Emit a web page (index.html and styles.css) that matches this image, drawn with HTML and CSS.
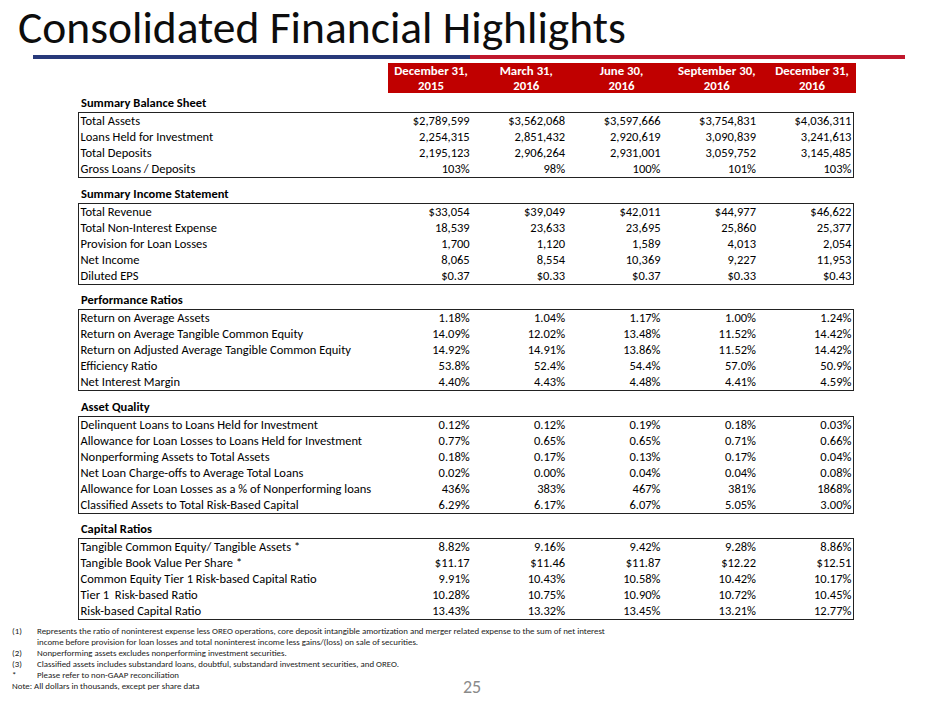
FILE: index.html
```html
<!DOCTYPE html>
<html lang="en">
<head>
<meta charset="utf-8">
<title>Consolidated Financial Highlights</title>
<link rel="stylesheet" href="styles.css">
</head>
<body>
<div class="slide">
  <h1 class="title">Consolidated Financial Highlights</h1>
  <div class="rule"></div>

  <div class="hdr">
    <div class="hdr-grid">
      <div>December 31,<br>2015</div>
      <div>March 31,<br>2016</div>
      <div>June 30,<br>2016</div>
      <div>September 30,<br>2016</div>
      <div>December 31,<br>2016</div>
    </div>
  </div>

  <section class="sec first">
    <h2>Summary Balance Sheet</h2>
    <div class="box">
      <span class="l">Total Assets</span><span class="v">$2,789,599</span><span class="v">$3,562,068</span><span class="v">$3,597,666</span><span class="v">$3,754,831</span><span class="v">$4,036,311</span>
      <span class="l">Loans Held for Investment</span><span class="v">2,254,315</span><span class="v">2,851,432</span><span class="v">2,920,619</span><span class="v">3,090,839</span><span class="v">3,241,613</span>
      <span class="l">Total Deposits</span><span class="v">2,195,123</span><span class="v">2,906,264</span><span class="v">2,931,001</span><span class="v">3,059,752</span><span class="v">3,145,485</span>
      <span class="l">Gross Loans / Deposits</span><span class="v">103%</span><span class="v">98%</span><span class="v">100%</span><span class="v">101%</span><span class="v">103%</span>
    </div>
  </section>

  <section class="sec">
    <h2>Summary Income Statement</h2>
    <div class="box">
      <span class="l">Total Revenue</span><span class="v">$33,054</span><span class="v">$39,049</span><span class="v">$42,011</span><span class="v">$44,977</span><span class="v">$46,622</span>
      <span class="l">Total Non-Interest Expense</span><span class="v">18,539</span><span class="v">23,633</span><span class="v">23,695</span><span class="v">25,860</span><span class="v">25,377</span>
      <span class="l">Provision for Loan Losses</span><span class="v">1,700</span><span class="v">1,120</span><span class="v">1,589</span><span class="v">4,013</span><span class="v">2,054</span>
      <span class="l">Net Income</span><span class="v">8,065</span><span class="v">8,554</span><span class="v">10,369</span><span class="v">9,227</span><span class="v">11,953</span>
      <span class="l">Diluted EPS</span><span class="v">$0.37</span><span class="v">$0.33</span><span class="v">$0.37</span><span class="v">$0.33</span><span class="v">$0.43</span>
    </div>
  </section>

  <section class="sec">
    <h2>Performance Ratios</h2>
    <div class="box">
      <span class="l">Return on Average Assets</span><span class="v">1.18%</span><span class="v">1.04%</span><span class="v">1.17%</span><span class="v">1.00%</span><span class="v">1.24%</span>
      <span class="l">Return on Average Tangible Common Equity</span><span class="v">14.09%</span><span class="v">12.02%</span><span class="v">13.48%</span><span class="v">11.52%</span><span class="v">14.42%</span>
      <span class="l">Return on Adjusted Average Tangible Common Equity</span><span class="v">14.92%</span><span class="v">14.91%</span><span class="v">13.86%</span><span class="v">11.52%</span><span class="v">14.42%</span>
      <span class="l">Efficiency Ratio</span><span class="v">53.8%</span><span class="v">52.4%</span><span class="v">54.4%</span><span class="v">57.0%</span><span class="v">50.9%</span>
      <span class="l">Net Interest Margin</span><span class="v">4.40%</span><span class="v">4.43%</span><span class="v">4.48%</span><span class="v">4.41%</span><span class="v">4.59%</span>
    </div>
  </section>

  <section class="sec">
    <h2>Asset Quality</h2>
    <div class="box">
      <span class="l">Delinquent Loans to Loans Held for Investment</span><span class="v">0.12%</span><span class="v">0.12%</span><span class="v">0.19%</span><span class="v">0.18%</span><span class="v">0.03%</span>
      <span class="l">Allowance for Loan Losses to Loans Held for Investment</span><span class="v">0.77%</span><span class="v">0.65%</span><span class="v">0.65%</span><span class="v">0.71%</span><span class="v">0.66%</span>
      <span class="l">Nonperforming Assets to Total Assets</span><span class="v">0.18%</span><span class="v">0.17%</span><span class="v">0.13%</span><span class="v">0.17%</span><span class="v">0.04%</span>
      <span class="l">Net Loan Charge-offs to Average Total Loans</span><span class="v">0.02%</span><span class="v">0.00%</span><span class="v">0.04%</span><span class="v">0.04%</span><span class="v">0.08%</span>
      <span class="l">Allowance for Loan Losses as a % of Nonperforming loans</span><span class="v">436%</span><span class="v">383%</span><span class="v">467%</span><span class="v">381%</span><span class="v">1868%</span>
      <span class="l">Classified Assets to Total Risk-Based Capital</span><span class="v">6.29%</span><span class="v">6.17%</span><span class="v">6.07%</span><span class="v">5.05%</span><span class="v">3.00%</span>
    </div>
  </section>

  <section class="sec">
    <h2>Capital Ratios</h2>
    <div class="box">
      <span class="l">Tangible Common Equity/ Tangible Assets *</span><span class="v">8.82%</span><span class="v">9.16%</span><span class="v">9.42%</span><span class="v">9.28%</span><span class="v">8.86%</span>
      <span class="l">Tangible Book Value Per Share *</span><span class="v">$11.17</span><span class="v">$11.46</span><span class="v">$11.87</span><span class="v">$12.22</span><span class="v">$12.51</span>
      <span class="l">Common Equity Tier 1 Risk-based Capital Ratio</span><span class="v">9.91%</span><span class="v">10.43%</span><span class="v">10.58%</span><span class="v">10.42%</span><span class="v">10.17%</span>
      <span class="l">Tier 1&nbsp; Risk-based Ratio</span><span class="v">10.28%</span><span class="v">10.75%</span><span class="v">10.90%</span><span class="v">10.72%</span><span class="v">10.45%</span>
      <span class="l">Risk-based Capital Ratio</span><span class="v">13.43%</span><span class="v">13.32%</span><span class="v">13.45%</span><span class="v">13.21%</span><span class="v">12.77%</span>
    </div>
  </section>

  <div class="notes">
    <div class="fn"><span>(1)</span><span>Represents the ratio of noninterest expense less OREO operations, core deposit intangible amortization and merger related expense to the sum of net interest income before provision for loan losses and total noninterest income less gains/(loss) on sale of securities.</span></div>
    <div class="fn"><span>(2)</span><span>Nonperforming assets excludes nonperforming investment securities.</span></div>
    <div class="fn"><span>(3)</span><span>Classified assets includes substandard loans, doubtful, substandard investment securities, and OREO.</span></div>
    <div class="fn"><span>*</span><span>Please refer to non-GAAP reconciliation</span></div>
    <div class="note">Note: All dollars in thousands, except per share data</div>
  </div>

  <div class="pgnum">25</div>
</div>
</body>
</html>
```

FILE: styles.css
```css
* {
  box-sizing: border-box;
  margin: 0;
  padding: 0;
}

body {
  margin: 0;
  background: #ffffff;
  font-family: Carlito, Lato, "Liberation Sans", sans-serif;
  color: #000000;
}

.slide {
  position: relative;
  width: 940px;
  height: 705px;
  overflow: hidden;
  background: #ffffff;
}

.title {
  height: 55px;
  padding: 5px 0 0 18px;
  font-size: 45.5px;
  line-height: 46px;
  font-weight: 400;
  color: #0d0d0d;
  white-space: nowrap;
}

.rule {
  margin-left: 33px;
  width: 872px;
  height: 4px;
  background: linear-gradient(90deg, #27397a 0, #27397a 437px, #c0182c 437px, #c0182c 100%);
}

.hdr {
  margin: 4px 0 0 388px;
  width: 468px;
  height: 30px;
  background: #c00000;
  color: #ffffff;
  font-size: 12.8px;
  line-height: 15px;
  font-weight: 700;
}

.hdr-grid {
  display: grid;
  grid-template-columns: repeat(5, 95.25px);
  margin-left: -4.6px;
  text-align: center;
  white-space: nowrap;
}

.sec h2 {
  padding: 7.5px 0 2px 81px;
  font-size: 12.5px;
  line-height: 15px;
  font-weight: 700;
}

.sec.first h2 {
  padding-top: 2px;
}

.box {
  display: grid;
  grid-template-columns: 295.75px repeat(5, 95.45px);
  grid-auto-rows: 16px;
  margin-left: 78px;
  width: 776px;
  border: 1.5px solid #222222;
  font-size: 12.5px;
  line-height: 16px;
}

.l {
  padding-left: 1.5px;
  white-space: nowrap;
}

.v {
  padding-right: 0.5px;
  text-align: right;
  white-space: nowrap;
}

.notes {
  margin-top: 5.5px;
  padding-left: 12px;
  font-size: 8.9px;
  line-height: 11px;
  color: #1a1a1a;
}

.fn {
  display: grid;
  grid-template-columns: 25px 575px;
}

.pgnum {
  position: absolute;
  left: 463px;
  top: 677px;
  font-size: 18px;
  line-height: 20px;
  color: #8a8a8a;
}
```
